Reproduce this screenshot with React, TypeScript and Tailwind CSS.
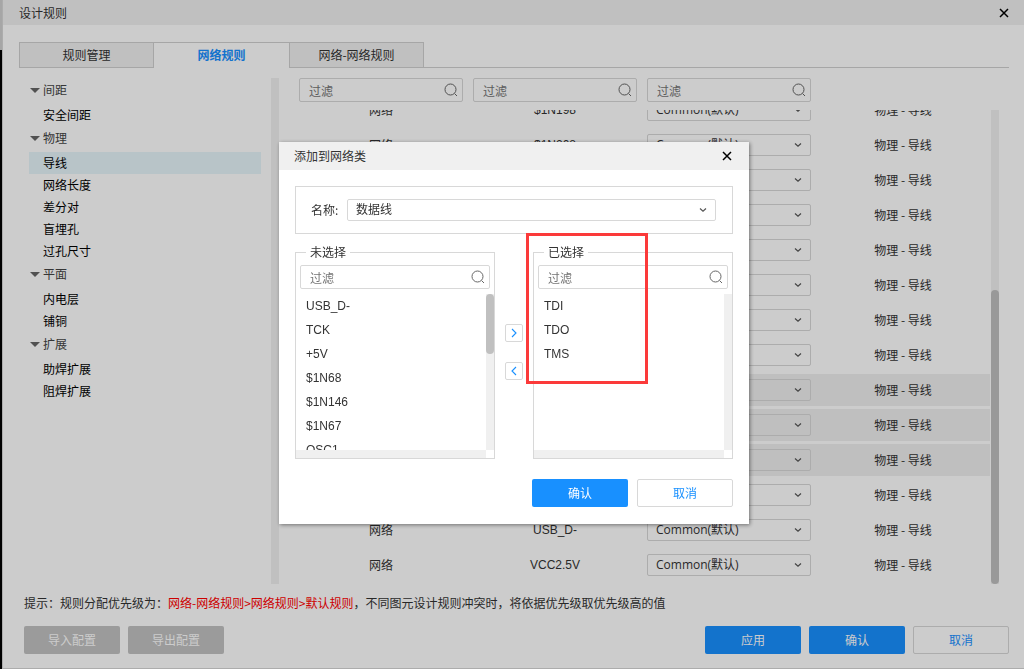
import { useState } from 'react';
import clsx from 'clsx';

const tabs = ['规则管理', '网络规则', '网络-网络规则'];

const tree = [
    { title: '间距', items: ['安全间距'] },
    { title: '物理', items: ['导线', '网络长度', '差分对', '盲埋孔', '过孔尺寸'] },
    { title: '平面', items: ['内电层', '铺铜'] },
    { title: '扩展', items: ['助焊扩展', '阻焊扩展'] },
];

const nets = [
    { name: '$1N198' },
    { name: '$1N208' },
    { name: '$1N67' },
    { name: '$1N68' },
    { name: '+5V' },
    { name: 'GND' },
    { name: 'OSC1' },
    { name: 'TCK' },
    { name: 'TDI', selected: true },
    { name: 'TDO', selected: true },
    { name: 'TMS', selected: true },
    { name: 'USB_D+' },
    { name: 'USB_D-' },
    { name: 'VCC2.5V' },
];

function SearchIcon() {
    return (
        <svg width="14" height="14" viewBox="0 0 14 14" fill="none" stroke="#666" className="absolute right-[5px] top-[5px]">
            <circle cx="6.5" cy="6.5" r="5.5" />
            <path d="M10.6 10.6 13 13" />
        </svg>
    );
}

function CloseIcon() {
    return (
        <svg width="10" height="10" viewBox="0 0 10 10" fill="none" stroke="#000" strokeWidth="1.5">
            <path d="M1 1 9 9M9 1 1 9" />
        </svg>
    );
}

function Filter({ label, className }: { label: string; className?: string }) {
    return (
        <div className={clsx('relative', className)}>
            <input
                type="text"
                aria-label={label}
                placeholder="过滤"
                className="block h-6 w-full rounded-xs border border-[#d8d8d8] bg-transparent pl-[9px] pr-6 text-xs outline-none placeholder:text-[#757575]"
            />
            <SearchIcon />
        </div>
    );
}

function Select({ id, label, options, className }: { id?: string; label?: string; options: string[]; className?: string }) {
    return (
        <div className={clsx('relative', className)}>
            <select
                id={id}
                aria-label={label}
                className="block h-[22px] w-full appearance-none rounded-xs border border-[#d8d8d8] bg-transparent pl-2 pr-6 font-['Open_Sans','Noto_Sans_CJK_SC',sans-serif] text-xs leading-5 text-[#333] outline-none"
            >
                {options.map((o) => (
                    <option key={o}>{o}</option>
                ))}
            </select>
            <svg width="8" height="6" viewBox="0 0 8 6" fill="none" stroke="#555" strokeWidth="1.2" className="pointer-events-none absolute right-[9px] top-2">
                <path d="M1 1.5 4 4.3 7 1.5" />
            </svg>
        </div>
    );
}

function Button({ kind, children }: { kind: 'primary' | 'plain' | 'disabled'; children: string }) {
    return (
        <button
            type="button"
            disabled={kind === 'disabled'}
            className={clsx(
                'h-7 w-24 rounded-xs text-xs',
                kind === 'primary' && 'bg-[#1890ff] text-white',
                kind === 'plain' && 'border border-[#d8d8d8] bg-white text-[#1890ff]',
                kind === 'disabled' && 'bg-[#c2c2c2] text-white'
            )}
        >
            {children}
        </button>
    );
}

function NetList({ title, items, scroll }: { title: string; items: string[]; scroll?: boolean }) {
    return (
        <fieldset className="w-[200px] border border-[#d8d8d8]">
            <legend className="ml-[10px] h-4 px-1 leading-4">{title}</legend>
            <Filter label={title} className="mx-1 mt-[5px]" />
            <div className="mt-[5px] flex h-[156px]">
                <ul className="flex-1 overflow-hidden font-['Liberation_Sans',sans-serif]">
                    {items.map((n) => (
                        <li key={n} className="h-6 pl-[10px] leading-6">{n}</li>
                    ))}
                </ul>
                <div className="w-2 bg-[#f0f0f0]">
                    {scroll && <div className="h-[60px] rounded-full bg-[#c0c0c0]" />}
                </div>
            </div>
            <div className="mr-2 h-2 bg-[#f0f0f0]" />
        </fieldset>
    );
}

function AddToClassDialog() {
    return (
        <div role="dialog" aria-label="添加到网络类" className="relative w-[470px] bg-white shadow-[1px_1px_4px_rgba(0,0,0,0.45)]">
            <div className="flex h-7 items-center justify-between bg-[#f0f0f0] pl-[15px] pr-[17px]">
                <span>添加到网络类</span>
                <button type="button" aria-label="关闭"><CloseIcon /></button>
            </div>
            <div className="px-4 pb-[17px] pt-4">
                <div className="flex h-12 items-center border border-[#d8d8d8] pl-[15px] pr-4">
                    <label htmlFor="class-name" className="w-9">名称:</label>
                    <Select id="class-name" options={['数据线']} className="flex-1" />
                </div>
                <div className="mt-[10px] flex justify-between">
                    <NetList title="未选择" items={['USB_D-', 'TCK', '+5V', '$1N68', '$1N146', '$1N67', 'OSC1']} scroll />
                    <div className="flex flex-col gap-5 pt-20">
                        <button type="button" aria-label="添加" className="flex size-[18px] items-center justify-center rounded-xs border border-[#d8d8d8]">
                            <svg width="6" height="10" viewBox="0 0 6 10" fill="none" stroke="#1890ff" strokeWidth="1.1">
                                <path d="M1 1 5 5 1 9" />
                            </svg>
                        </button>
                        <button type="button" aria-label="移除" className="flex size-[18px] items-center justify-center rounded-xs border border-[#d8d8d8]">
                            <svg width="6" height="10" viewBox="0 0 6 10" fill="none" stroke="#1890ff" strokeWidth="1.1">
                                <path d="M5 1 1 5 5 9" />
                            </svg>
                        </button>
                    </div>
                    <NetList title="已选择" items={['TDI', 'TDO', 'TMS']} />
                </div>
                <div className="mt-5 flex justify-end gap-[9px]">
                    <Button kind="primary">确认</Button>
                    <Button kind="plain">取消</Button>
                </div>
            </div>
            {/* highlight around the selected nets */}
            <div className="pointer-events-none absolute left-[247px] top-[91px] h-[151px] w-[122px] border-3 border-[#fb3a3a]" />
        </div>
    );
}

export default function App() {
    const [tab, setTab] = useState('网络规则');
    const [rule, setRule] = useState('导线');

    return (
        <div className="flex h-screen overflow-hidden bg-black font-['Noto_Sans_CJK_SC',sans-serif] text-xs text-[#333]">
            <div className="w-[2px]">
                <div className="h-[50px] bg-[#d0d0d0]" />
            </div>
            <div className="flex min-w-0 flex-1 flex-col border-b border-l border-[#d8d8d8] bg-white">
                <header className="flex h-[25px] shrink-0 items-center justify-between bg-[#f1f1f1] pl-4 pr-[15px]">
                    <h1>设计规则</h1>
                    <button type="button" aria-label="关闭"><CloseIcon /></button>
                </header>

                <nav className="ml-4 mr-[15px] mt-[17px] flex h-[26px] shrink-0">
                    {tabs.map((t) => (
                        <button
                            key={t}
                            type="button"
                            onClick={() => setTab(t)}
                            className={clsx(
                                'w-[135px] border-y border-[#d0d0d0]',
                                t === tab ? 'border-b-transparent font-bold text-[#1890ff]' : 'border-x bg-[#f1f1f1]'
                            )}
                        >
                            {t}
                        </button>
                    ))}
                    <div className="flex-1 border-b border-[#d0d0d0]" />
                </nav>

                <main className="ml-4 mr-[25px] mt-[10px] flex min-h-0 flex-1">
                    <aside className="flex w-[260px] shrink-0">
                        <div className="flex-1 px-[10px]">
                            {tree.map((group) => (
                                <section key={group.title} className="flex flex-col">
                                    <h2 className="mb-[2px] flex h-6 items-center text-[#444]">
                                        <svg width="10" height="5" viewBox="0 0 10 5" className="ml-px mr-[3px]">
                                            <path d="M0 0H10L5 5Z" fill="#666" />
                                        </svg>
                                        {group.title}
                                    </h2>
                                    {group.items.map((item) => (
                                        <button
                                            key={item}
                                            type="button"
                                            onClick={() => setRule(item)}
                                            className={clsx('h-[22px] pl-[14px] text-left text-black', item === rule && 'bg-[#e6f5fb]')}
                                        >
                                            {item}
                                        </button>
                                    ))}
                                </section>
                            ))}
                        </div>
                        <div className="w-2 bg-[#f1f1f1]" />
                    </aside>

                    <div className="flex min-w-0 flex-1 flex-col">
                        <div className="ml-[15px] mr-[9px] grid grid-cols-4">
                            <Filter label="类型过滤" className="mx-[5px]" />
                            <Filter label="网络过滤" className="mx-[5px]" />
                            <Filter label="规则过滤" className="mx-[5px]" />
                        </div>
                        <div className="mt-2 flex min-h-0 flex-1">
                            <div className="flex min-w-0 flex-1 flex-col justify-end overflow-hidden pl-[15px] pr-px">
                                <table className="w-full table-fixed border-separate border-spacing-x-0 border-spacing-y-[3px] text-center">
                                    <tbody>
                                        {nets.map((net) => (
                                            <tr key={net.name} className={clsx('h-8', net.selected && 'bg-[#efefef]')}>
                                                <td className="p-0">网络</td>
                                                <td className="p-0 font-['Liberation_Sans',sans-serif]">{net.name}</td>
                                                <td className="px-[5px] py-0">
                                                    <Select label={net.name} options={['Common(默认)']} />
                                                </td>
                                                <td className="p-0">物理 - 导线</td>
                                            </tr>
                                        ))}
                                    </tbody>
                                </table>
                            </div>
                            <div className="flex w-2 flex-col justify-end bg-[#f1f1f1]">
                                <div className="h-[62%] rounded-full bg-[#c0c0c0]" />
                            </div>
                        </div>
                    </div>
                </main>

                <p className="mb-[14px] ml-[21px] mt-[10px] h-[18px] shrink-0 leading-[18px]">
                    提示：规则分配优先级为：
                    <span className="text-[#ff0000]">网络-网络规则&gt;网络规则&gt;默认规则</span>
                    ，不同图元设计规则冲突时，将依据优先级取优先级高的值
                </p>

                <footer className="mb-[14px] ml-[21px] mr-[15px] flex shrink-0 gap-2">
                    <Button kind="disabled">导入配置</Button>
                    <Button kind="disabled">导出配置</Button>
                    <div className="flex-1" />
                    <Button kind="primary">应用</Button>
                    <Button kind="primary">确认</Button>
                    <Button kind="plain">取消</Button>
                </footer>
            </div>

            <div className="fixed inset-0 flex items-center justify-center bg-black/20 pb-[3px] pl-1">
                <AddToClassDialog />
            </div>
        </div>
    );
}
